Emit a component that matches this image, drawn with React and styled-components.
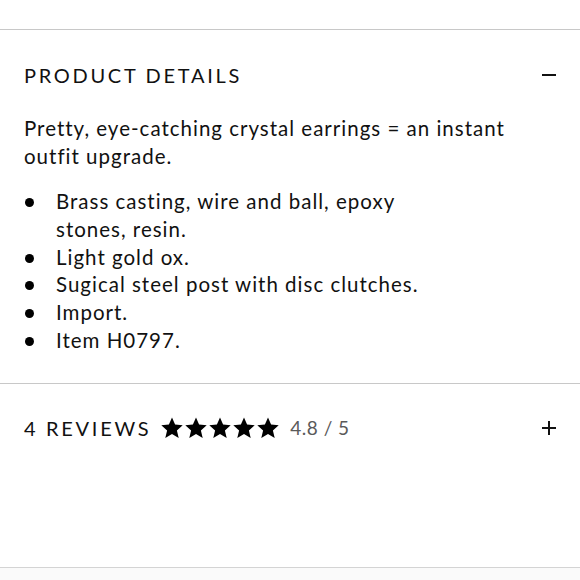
import React from 'react'
import styled, { createGlobalStyle } from 'styled-components';

const GlobalStyle = createGlobalStyle`
  html, body {
    margin: 0;
    padding: 0;
    background: #ffffff;
  }
  body {
    font-family: Lato, "Open Sans", "Liberation Sans", sans-serif;
    color: #111;
  }
`;

const details = [
  'Brass casting, wire and ball, epoxy stones, resin.',
  'Light gold ox.',
  'Sugical steel post with disc clutches.',
  'Import.',
  'Item H0797.',
];

const Star = () => (
  <svg width="24" height="24" viewBox="0 0 24 24">
    <path d="M12 1.5l3.1 7.1 7.6.7-5.8 5.1 1.8 7.6L12 18l-6.7 4 1.8-7.6L1.3 9.3l7.6-.7z" fill="#000" />
  </svg>
);

const App = () => {
  return (
    <Page>
      <GlobalStyle />
      <TopSpace />
      <Section>
        <Header>
          <Title>PRODUCT DETAILS</Title>
          <Toggle><Bar /></Toggle>
        </Header>
        <Intro>Pretty, eye-catching crystal earrings = an instant outfit upgrade.</Intro>
        <List>
          {details.map((d) => (
            <Item key={d}>{d}</Item>
          ))}
        </List>
      </Section>
      <ReviewSection>
        <ReviewRow>
          <Title>4 REVIEWS</Title>
          <Stars>
            {[0, 1, 2, 3, 4].map((i) => <Star key={i} />)}
          </Stars>
          <Score>4.8 / 5</Score>
          <Toggle><Bar /><Bar $vertical /></Toggle>
        </ReviewRow>
      </ReviewSection>
      <Footer />
    </Page>
  )
}

export default App;

const Page = styled.div`
  width: 580px;
  height: 580px;
  overflow: hidden;
  display: flex;
  flex-direction: column;
`;

const TopSpace = styled.div`
  height: 29px;
  flex-shrink: 0;
`;

const Section = styled.section`
  border-top: 1.5px solid #c8c8c8;
  padding: 0 24px 28px;
`;

const Header = styled.div`
  display: flex;
  align-items: center;
  justify-content: space-between;
  height: 28px;
  margin-top: 31px;
`;

const Title = styled.h2`
  margin: 0;
  font-size: 20px;
  font-weight: 400;
  letter-spacing: 2.7px;
  color: #111;
  white-space: nowrap;
`;

const Toggle = styled.div`
  position: relative;
  width: 14px;
  height: 14px;
  margin-left: auto;
  margin-right: 0;
`;

const Bar = styled.span`
  position: absolute;
  background: #111;
  ${(p) => p.$vertical
    ? 'left: 6px; top: 0; width: 2px; height: 14px;'
    : 'left: 0; top: 6px; width: 14px; height: 2px;'}
`;

const Intro = styled.p`
  margin: 25px 0 0;
  font-size: 20.5px;
  line-height: 28px;
  letter-spacing: 1px;
  color: #111;
`;

const List = styled.ul`
  margin: 18px 0 0;
  padding: 0;
  list-style: none;
  max-width: 440px;
`;

const Item = styled.li`
  position: relative;
  padding-left: 32px;
  font-size: 20.5px;
  line-height: 27.8px;
  letter-spacing: 1px;
  color: #111;
  &::before {
    content: '';
    position: absolute;
    left: 1px;
    top: 10px;
    width: 9px;
    height: 9px;
    border-radius: 50%;
    background: #000;
  }
`;

const ReviewSection = styled.section`
  border-top: 1.5px solid #c8c8c8;
  padding: 0 24px;
  flex: 1;
`;

const ReviewRow = styled.div`
  display: flex;
  align-items: center;
  height: 30px;
  margin-top: 29px;
`;

const Stars = styled.div`
  display: flex;
  margin-left: 9px;
  margin-right: 10px;
`;

const Score = styled.span`
  font-size: 19px;
  color: #5a5a5a;
  letter-spacing: 0.5px;
`;

const Footer = styled.div`
  height: 12px;
  flex-shrink: 0;
  border-top: 1.5px solid #d4d4d4;
  background: #fafafa;
`;
